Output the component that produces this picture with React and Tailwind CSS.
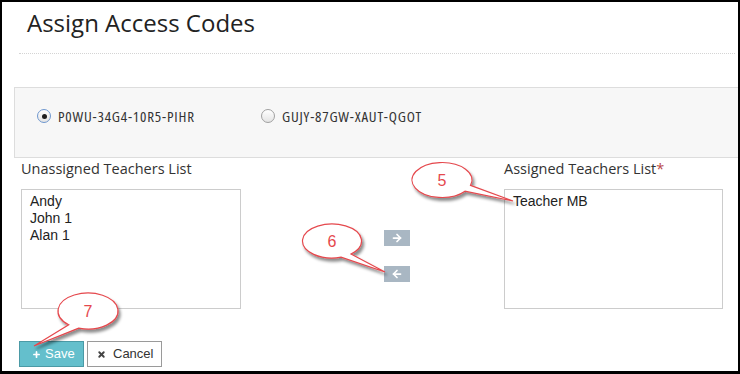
import { ArrowRight, ArrowLeft, Plus, X } from 'lucide-react';

const ellipsePoint = (cx, cy, rx, ry, deg) => {
  const t = (deg * Math.PI) / 180;
  return [cx + rx * Math.cos(t), cy + ry * Math.sin(t)];
};

function Callout({ cx, cy, rx, ry, a1, a2, tip, label }) {
  const [ax, ay] = ellipsePoint(cx, cy, rx, ry, a1);
  const [bx, by] = ellipsePoint(cx, cy, rx, ry, a2);
  const d = `M ${ax} ${ay} L ${tip[0]} ${tip[1]} L ${bx} ${by} A ${rx} ${ry} 0 1 1 ${ax} ${ay} Z`;
  return (
    <g>
      <path d={d} fill="#fff" stroke="#e5484d" strokeWidth="1.2" filter="url(#shadow)" />
      <text
        x={cx}
        y={cy + 6}
        textAnchor="middle"
        fontFamily="'Liberation Sans', Arial, sans-serif"
        fontSize="16"
        fill="#e5484d"
      >
        {label}
      </text>
    </g>
  );
}

function Radio({ checked, label }) {
  return (
    <label className="flex items-center gap-[7px]">
      <span
        className={`flex items-center justify-center w-[14px] h-[14px] rounded-full border bg-gradient-to-b from-white to-[#e4e4e4] ${
          checked ? 'border-[#6f97cf]' : 'border-[#a0a0a0]'
        }`}
      >
        {checked && <span className="w-[5px] h-[5px] rounded-full bg-[#1e1e1e]" />}
      </span>
      <span className="text-[15px] leading-5 text-[#333] [font-stretch:condensed] tracking-[0.8px]">{label}</span>
    </label>
  );
}

export default function App() {
  return (
    <div className="relative w-[740px] h-[374px] bg-white border-t-2 border-l-2 border-r-2 border-b-[3px] border-black overflow-hidden font-['Open_Sans',sans-serif]">
      {/* Header */}
      <div className="ml-[17px] mr-[3px] h-[52px] pl-[8px] pt-[5px] border-b border-dotted border-[#d4d4d4]">
        <h1 className="text-[24px] leading-8 text-[#222]">Assign Access Codes</h1>
      </div>

      {/* Access codes */}
      <div className="mt-[33px] ml-[12px] h-[71px] bg-[#f7f7f7] border-y border-l border-[#dddddd] pl-[22px] pt-[18px] flex items-start">
        <div className="w-[224px]">
          <Radio checked label="P0WU-34G4-10R5-PIHR" />
        </div>
        <Radio label="GUJY-87GW-XAUT-QGOT" />
      </div>

      {/* Lists */}
      <div className="flex ml-[19px] mt-[1px]">
        <div className="w-[220px]">
          <div className="text-[14.5px] leading-5 text-[#333]">Unassigned Teachers List</div>
          <div className="mt-[10px] h-[120px] border border-[#cccccc] px-[8px] pt-[3px] font-['Liberation_Sans',Arial,sans-serif] text-[14px] leading-[17px] text-[#222]">
            <div>Andy</div>
            <div>John 1</div>
            <div>Alan 1</div>
          </div>
        </div>

        <div className="ml-[143px] pt-[71px] flex flex-col gap-[20px]">
          <button className="w-[26px] h-[16px] bg-[#a9b7c3] flex items-center justify-center">
            <ArrowRight size={12} strokeWidth={3.5} color="#fff" />
          </button>
          <button className="w-[26px] h-[16px] bg-[#a9b7c3] flex items-center justify-center">
            <ArrowLeft size={12} strokeWidth={3.5} color="#fff" />
          </button>
        </div>

        <div className="ml-[94px] w-[219px]">
          <div className="text-[14.5px] leading-5 text-[#333]">
            Assigned Teachers List<span className="text-[#b94a48]">*</span>
          </div>
          <div className="mt-[10px] h-[120px] border border-[#cccccc] px-[8px] pt-[3px] font-['Liberation_Sans',Arial,sans-serif] text-[14px] leading-[17px] text-[#222]">
            <div>Teacher MB</div>
          </div>
        </div>
      </div>

      {/* Actions */}
      <div className="flex gap-[3px] ml-[17px] mt-[32px] font-['Liberation_Sans',Arial,sans-serif] text-[13px]">
        <button className="w-[65px] h-[26px] bg-[#64bfcc] border border-[#4b9aa6] text-white flex items-center pl-[12px] gap-[4px]">
          <Plus size={9} strokeWidth={4.5} />
          <span>Save</span>
        </button>
        <button className="w-[75px] h-[26px] bg-white border border-[#9a9a9a] text-[#333] flex items-center pl-[9px] gap-[7px]">
          <X size={9} strokeWidth={5} color="#444" />
          <span>Cancel</span>
        </button>
      </div>

      {/* Annotation callouts */}
      <svg className="absolute left-[-2px] top-[-2px] pointer-events-none" width="740" height="374">
        <defs>
          <filter id="shadow" x="-30%" y="-30%" width="160%" height="170%">
            <feDropShadow dx="2" dy="3" stdDeviation="1.6" floodColor="#000" floodOpacity="0.45" />
          </filter>
        </defs>
        <Callout cx={442} cy={180} rx={30} ry={17.5} a1={18} a2={40} tip={[513, 201]} label="5" />
        <Callout cx={332} cy={241} rx={29.5} ry={17} a1={50} a2={72} tip={[385, 272]} label="6" />
        <Callout cx={88} cy={311} rx={30} ry={18} a1={108} a2={130} tip={[34, 346]} label="7" />
      </svg>
    </div>
  );
}
